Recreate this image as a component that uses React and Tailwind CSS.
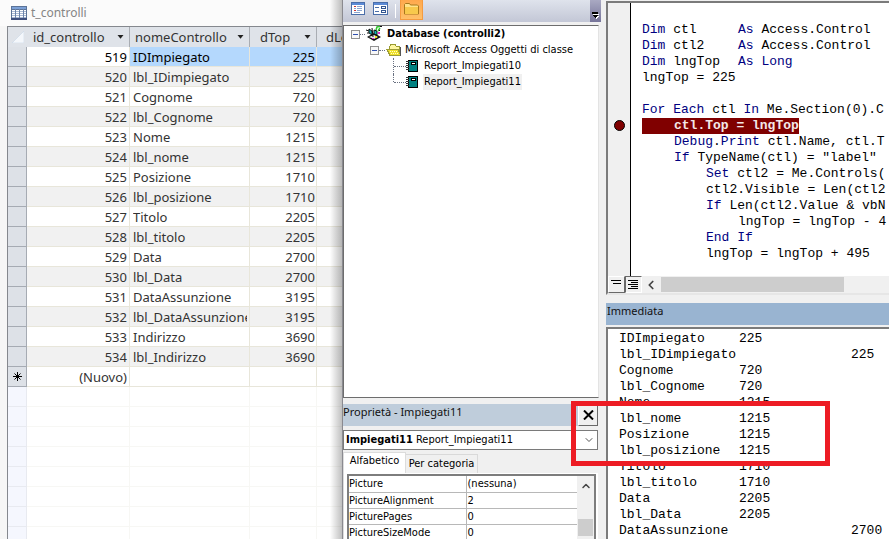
import clsx from 'clsx';
import { FiChevronDown, FiChevronLeft, FiChevronUp } from 'react-icons/fi';

const records = [
    { id: 519, name: 'IDImpiegato', top: 225 },
    { id: 520, name: 'lbl_IDimpiegato', top: 225 },
    { id: 521, name: 'Cognome', top: 720 },
    { id: 522, name: 'lbl_Cognome', top: 720 },
    { id: 523, name: 'Nome', top: 1215 },
    { id: 524, name: 'lbl_nome', top: 1215 },
    { id: 525, name: 'Posizione', top: 1710 },
    { id: 526, name: 'lbl_posizione', top: 1710 },
    { id: 527, name: 'Titolo', top: 2205 },
    { id: 528, name: 'lbl_titolo', top: 2205 },
    { id: 529, name: 'Data', top: 2700 },
    { id: 530, name: 'lbl_Data', top: 2700 },
    { id: 531, name: 'DataAssunzione', top: 3195 },
    { id: 532, name: 'lbl_DataAssunzione', top: 3195 },
    { id: 533, name: 'Indirizzo', top: 3690 },
    { id: 534, name: 'lbl_Indirizzo', top: 3690 },
];

const columns = [
    { label: 'id_controllo', pad: 'pl-[6px]' },
    { label: 'nomeControllo', pad: 'pl-[5px]' },
    { label: 'dTop', pad: 'pl-[10px]' },
    { label: 'dLeft', pad: 'pl-[9px]' },
];

const properties = [
    ['Picture', '(nessuna)'],
    ['PictureAlignment', '2'],
    ['PicturePages', '0'],
    ['PictureSizeMode', '0'],
];

// wide: the name runs past the first print zone, so the value goes to the next one
const output = [
    { name: 'IDImpiegato', value: 225 },
    { name: 'lbl_IDimpiegato', value: 225, wide: true },
    { name: 'Cognome', value: 720 },
    { name: 'lbl_Cognome', value: 720 },
    { name: 'Nome', value: 1215 },
    { name: 'lbl_nome', value: 1215 },
    { name: 'Posizione', value: 1215 },
    { name: 'lbl_posizione', value: 1215 },
    { name: 'Titolo', value: 1710 },
    { name: 'lbl_titolo', value: 1710 },
    { name: 'Data', value: 2205 },
    { name: 'lbl_Data', value: 2205 },
    { name: 'DataAssunzione', value: 2700, wide: true },
];

const code = [
    '',
    'Dim ctl\t\tAs Access.Control',
    'Dim ctl2\tAs Access.Control',
    'Dim lngTop\tAs Long',
    'lngTop = 225',
    '',
    'For Each ctl In Me.Section(0).C',
    '\tctl.Top = lngTop',
    '\tDebug.Print ctl.Name, ctl.T',
    '\tIf TypeName(ctl) = "label"',
    '\t\tSet ctl2 = Me.Controls(',
    '\t\tctl2.Visible = Len(ctl2',
    '\t\tIf Len(ctl2.Value & vbN',
    '\t\t\tlngTop = lngTop - 4',
    '\t\tEnd If',
    '\t\tlngTop = lngTop + 495',
];

const BREAKPOINT_LINE = 7;
const KEYWORDS = /\b(Dim|As|Long|For|Each|In|If|Set|End|Debug|Print)\b/;

function TableIcon() {
    return (
        <svg className="w-4 h-[14px]" viewBox="0 0 16 14" shapeRendering="crispEdges">
            <rect width="16" height="14" fill="#5b7397" />
            <rect x="1" y="1" width="14" height="2" fill="#7ba0d6" />
            <rect x="1" y="4" width="14" height="8" fill="#a9b9d3" />
            {[4, 6, 8, 10].map((y) =>
                [1, 5, 9, 13].map((x) => <rect key={`${x}-${y}`} x={x} y={y} width={x === 13 ? 2 : 3} height="1" fill="#fff" />)
            )}
            <path d="M4.500 3v10M8.500 3v10M12.500 3v10" stroke="#6d85aa" />
            <rect y="12" width="16" height="2" fill="#3e4f7c" />
        </svg>
    );
}

function ProjectIcon() {
    return (
        <svg className="w-4 h-4" viewBox="0 0 16 16">
            <path d="M1 11l7-4 7 4-7 4z" fill="#111" />
            <path d="M3 11l5-2 4 2-4 2z" fill="#eee" />
            <path d="M3 3l3 2v4L3 7z" fill="#12b5b5" stroke="#111" />
            <path d="M8 4l3 1v4L8 8z" fill="#12b5b5" stroke="#111" />
            <path d="M0 4l3 1M1 7h2M6 2l1 9" stroke="#111" />
            <path d="M10 4l1-3 4-1M14 2l-2 3" fill="none" stroke="#2fc42f" strokeWidth="1.500" />
            <path d="M14 0h2v1h-2zM13 4h1v1h-1z" fill="#111" />
            <path d="M12 6h2v2h-2zM6 12h2v1H6z" fill="#e02fd0" />
            <path d="M9 10h2v2H9z" fill="#f0e020" />
        </svg>
    );
}

function FolderIcon() {
    return (
        <svg className="w-4 h-4" viewBox="0 0 16 16" shapeRendering="crispEdges">
            <path d="M3.500 7V4.500l1.500-2h4l1.500 2h3V12" fill="#fff7a0" stroke="#9a9a30" />
            <path d="M1 7.500h11l2.500 6H4z" fill="#f0e22a" stroke="#9c9c38" />
            <path d="M4 9.500h8M5 11.500h8" stroke="#fffbd0" strokeDasharray="1 1" />
            <path d="M14.500 5v9" stroke="#555" />
        </svg>
    );
}

function ReportIcon() {
    return (
        <svg className="w-3 h-3" viewBox="0 0 12 12" shapeRendering="crispEdges">
            <rect x="2" y="0" width="10" height="12" fill="#000" />
            <rect x="3" y="1" width="8" height="10" fill="#008080" />
            <rect x="5" y="2" width="5" height="3" fill="#000" />
            <rect x="6" y="3" width="3" height="1" fill="#fff" />
            {[1, 3, 5, 7, 9].map((y) => <rect key={y} x="0" y={y} width="3" height="1" fill="#333" />)}
        </svg>
    );
}

function Expander() {
    return (
        <svg className="w-[9px] h-[9px] shrink-0" viewBox="0 0 9 9" shapeRendering="crispEdges">
            <rect x=".5" y=".5" width="8" height="8" fill="#f8f8f8" stroke="#919191" />
            <path d="M2 4.500h5" stroke="#3050b0" />
        </svg>
    );
}

function FilterArrow() {
    return (
        <svg className="w-[7px] h-1" viewBox="0 0 7 4">
            <path d="M.5 0h6L3.500 3.800z" fill="#222" />
        </svg>
    );
}

function Datasheet() {
    const cell = 'border-r border-b border-[#e8e6da] p-0 pt-px';
    const empty = 'border-r border-b border-[#f7f7f4] p-0';

    return (
        <section className="w-[342px] shrink-0 relative overflow-hidden bg-[#f6f6f6] flex flex-col font-['Noto_Sans',sans-serif]">
            <div className="h-[26px] shrink-0 bg-[#fbfbfb] flex items-center gap-1 pl-[11px] text-xs text-[#858585]">
                <TableIcon />
                t_controlli
            </div>
            <div className="flex-1 min-h-0 ml-[7px] border-t border-l border-[#85888e] bg-white overflow-hidden">
                <table className="table-fixed w-[400px] border-separate border-spacing-0 text-[13px] leading-[18px] text-[#333]">
                    <colgroup>
                        <col className="w-[19px]" />
                        <col className="w-[103px]" />
                        <col className="w-[120px]" />
                        <col className="w-[67px]" />
                        <col />
                    </colgroup>
                    <thead>
                        <tr className="h-5 bg-[#dfe3e9]">
                            <th className="p-0" aria-label="Seleziona tutto">
                                <svg className="w-3 h-3 ml-1" viewBox="0 0 12 12">
                                    <path d="M12 0v12H0z" fill="#f4f7fb" stroke="#c3d2e4" strokeWidth=".5" />
                                </svg>
                            </th>
                            {columns.map((col) => (
                                <th key={col.label} className="p-0 font-normal border-r border-[#a9adb3]">
                                    <div className={clsx('flex items-center justify-between pr-[5px]', col.pad)}>
                                        {col.label}
                                        <button aria-label={`Filtra ${col.label}`}><FilterArrow /></button>
                                    </div>
                                </th>
                            ))}
                        </tr>
                    </thead>
                    <tbody>
                        {records.map((r, i) => {
                            const selected = i === 0;
                            return (
                                <tr key={r.id} className={clsx('h-5', i % 2 === 1 && 'bg-[#f1f1f1]', selected && 'text-black')}>
                                    <td className="p-0 bg-[#dde1e7] border-r border-b border-[#a6abb3]"></td>
                                    <td className={clsx(cell, 'text-right pr-[2px]')}>{r.id}</td>
                                    <td className={clsx(cell, 'pl-[3px]', selected && 'bg-[#b4d8fd]')}>
                                        <div className="overflow-hidden whitespace-nowrap mr-[2px]">{r.name}</div>
                                    </td>
                                    <td className={clsx(cell, 'text-right pr-px', selected && 'bg-[#b4d8fd]')}>{r.top}</td>
                                    <td className={clsx(cell, selected && 'bg-[#b4d8fd]')}></td>
                                </tr>
                            );
                        })}
                        <tr className="h-5">
                            <td className="p-0 bg-[#dde1e7] border-r border-b border-[#a6abb3]">
                                <svg className="w-[9px] h-[9px] mx-auto" viewBox="0 0 9 9">
                                    <path d="M4.500 0v9M0 4.500h9M1.500 1.500l6 6M7.500 1.500l-6 6" stroke="#000" />
                                </svg>
                            </td>
                            <td className={clsx(cell, 'text-right pr-[2px]')}>(Nuovo)</td>
                            <td className={cell}></td>
                            <td className={cell}></td>
                            <td className={cell}></td>
                        </tr>
                        {Array.from({ length: 8 }, (_, i) => (
                            <tr key={i} className="h-5">
                                <td className="p-0 bg-[#f5f7fe] border-r border-b border-[#e8eaf0]"></td>
                                <td className={empty}></td>
                                <td className={empty}></td>
                                <td className={empty}></td>
                                <td className={empty}></td>
                            </tr>
                        ))}
                    </tbody>
                </table>
            </div>
            {/* Shadow of the editor window */}
            <div className="absolute inset-y-0 right-0 w-3 bg-linear-to-l from-black/25 to-transparent pointer-events-none"></div>
        </section>
    );
}

function Toolbar() {
    return (
        <div className="h-[22px] shrink-0 flex justify-between mr-[5px] bg-linear-to-b from-[#dfe3ec] to-[#c3c7d6] overflow-hidden">
            <div className="flex pl-1">
                <button aria-label="Visualizza codice" className="w-[22px] pt-px flex justify-center">
                    <svg className="w-[14px] h-[14px]" viewBox="0 0 14 14" shapeRendering="crispEdges">
                        <rect x=".5" y="1.500" width="13" height="12" fill="#fff" stroke="#4a6ea9" />
                        <path d="M1 3h12" stroke="#5b8ad6" strokeWidth="2" />
                        <path d="M3 5.500h2M3 9.500h2" stroke="#c33" />
                        <path d="M6 5.500h5M3 7.500h2M6 7.500h5M6 9.500h5M3 11.500h6" stroke="#8aa4cf" />
                    </svg>
                </button>
                <button aria-label="Visualizza oggetto" className="w-[22px] pt-px flex justify-center">
                    <svg className="w-[15px] h-[14px]" viewBox="0 0 15 14" shapeRendering="crispEdges">
                        <rect x=".5" y="1.500" width="14" height="12" fill="#fff" stroke="#4a6ea9" />
                        <path d="M1 3h13" stroke="#5b8ad6" strokeWidth="2" />
                        <path d="M2 6.500h4M2 10.500h4" stroke="#4a6ea9" />
                        <path d="M8.500 5.500h4v2h-4zM8.500 9.500h4v2h-4z" fill="none" stroke="#31548f" />
                    </svg>
                </button>
                <span className="w-px my-1 mx-1 bg-white"></span>
                <button aria-label="Mostra cartelle" className="w-[23px] h-5 bg-linear-to-b from-[#ffa84c] to-[#ffc069] border border-t-0 border-[#f59b3f] flex justify-center pt-[3px]">
                    <svg className="w-[15px] h-3" viewBox="0 0 15 12">
                        <path d="M.5 11V1.500L1.500.5h4l1 1.500h7l1 1V11z" fill="#ffe38a" stroke="#a9781c" />
                        <path d="M1 11V4h13v7z" fill="#f8c94c" />
                    </svg>
                </button>
            </div>
            <button aria-label="Opzioni barra degli strumenti" className="w-[11px] bg-linear-to-b from-[#a9a9c2] to-[#77759a] flex justify-center items-end pb-[3px]">
                <svg className="w-[7px] h-[7px]" viewBox="0 0 7 7" shapeRendering="crispEdges">
                    <path d="M1 2.500h6" stroke="#fff" />
                    <path d="M0 1h6" stroke="#000" strokeWidth="2" />
                    <path d="M1 4h6L4 7z" fill="#fff" />
                    <path d="M0 3h6L3 6z" fill="#000" />
                </svg>
            </button>
        </div>
    );
}

function ProjectTree() {
    return (
        <ul className="h-[373px] shrink-0 mt-[3px] mr-[7px] pl-[7px] bg-white border border-[#6d6d6d] border-r-[#e3e3e3] text-[11px] leading-4 whitespace-nowrap">
            <li>
                <div className="flex items-center h-4 font-bold">
                    <Expander />
                    <span className="w-[5px] border-t border-dotted border-gray-500 mr-px"></span>
                    <ProjectIcon />
                    <span className="pl-[5px]">Database (controlli2)</span>
                </div>
                <ul className="pl-[19px]">
                    <li>
                        <div className="flex items-center h-4">
                            <Expander />
                            <span className="w-[6px] border-t border-dotted border-gray-500 mr-px"></span>
                            <FolderIcon />
                            <span className="pl-[3px]">Microsoft Access Oggetti di classe</span>
                        </div>
                        <ul className="pl-[23px]">
                            {['Report_Impiegati10', 'Report_Impiegati11'].map((name, i) => (
                                <li key={name} className="flex items-center h-4">
                                    <span className={clsx('w-px self-start border-l border-dotted border-gray-500', i === 0 ? 'h-4' : 'h-2')}></span>
                                    <span className="w-3 border-t border-dotted border-gray-500"></span>
                                    <ReportIcon />
                                    <span className={clsx('ml-[5px] px-px', i === 1 && 'bg-[#f0f0f0]')}>{name}</span>
                                </li>
                            ))}
                        </ul>
                    </li>
                </ul>
            </li>
        </ul>
    );
}

function PropertiesPanel() {
    return (
        <div className="mt-[6px] flex-1 min-h-0 flex flex-col mr-2 text-[11px]">
            <div className="h-[22px] shrink-0 flex items-start justify-between bg-[#bfcddb]">
                <h2 className="font-['Noto_Sans',sans-serif] leading-4 text-[#111]">Proprietà - Impiegati11</h2>
                <button aria-label="Chiudi" className="w-5 h-[22px] bg-[#f0f0f0] border border-white border-r-[#696969] border-b-[#696969] flex items-center justify-center">
                    <svg className="w-[11px] h-[10px]" viewBox="0 0 11 10">
                        <path d="M1 .5l9 9M10 .5l-9 9" stroke="#000" strokeWidth="2" />
                    </svg>
                </button>
            </div>
            <button aria-label="Oggetto" className="h-5 shrink-0 mt-1 border border-[#7a7a7a] bg-white flex items-center pl-[2px] pr-[2px] whitespace-nowrap text-left">
                <span className="flex-1"><b>Impiegati11</b> Report_Impiegati11</span>
                <FiChevronDown className="w-3 h-3 text-[#555]" />
            </button>
            <div role="tablist" className="flex items-end shrink-0 mt-[2px] leading-4">
                <button role="tab" aria-selected="true" className="h-[21px] w-[63px] bg-white border border-b-0 border-[#dcdcdc] pb-1">Alfabetico</button>
                <button role="tab" aria-selected="false" className="h-[19px] w-[72px] bg-[#f0f0f0] border border-l-0 border-b-0 border-[#d9d9d9] whitespace-nowrap">Per categoria</button>
            </div>
            <div className="flex-1 min-h-0 bg-white pt-px pl-[3px] pr-[2px] border-l border-[#dcdcdc] overflow-hidden">
                <div className="flex border-2 border-b-0 border-[#7d7d7d] h-full overflow-hidden">
                    <table className="flex-1 table-fixed border-collapse leading-[15px] whitespace-nowrap">
                        <tbody>
                            {properties.map(([name, value]) => (
                                <tr key={name} className="h-4 border-b border-[#b8b8b8]">
                                    <th className="w-[117px] p-0 font-normal text-left border-r border-[#b8b8b8]">{name}</th>
                                    <td className="p-0 pl-px">{value}</td>
                                </tr>
                            ))}
                        </tbody>
                    </table>
                    <div className="w-[17px] shrink-0 bg-[#f0f0f0] flex flex-col items-center pt-1">
                        <FiChevronUp className="w-3 h-3 text-[#444]" strokeWidth={3} />
                        <span className="w-[15px] h-[17px] mt-[27px] bg-[#cdcdcd]"></span>
                    </div>
                </div>
            </div>
        </div>
    );
}

function CodeLine({ text, breakpoint }) {
    if (breakpoint) {
        return <span className="inline-block h-4 bg-[#800000] text-[#f4e8e8] font-bold">{text}</span>;
    }
    // split keeps the captured keywords at the odd positions
    return text.split(KEYWORDS).map((part, i) => (
        <span key={i} className={i % 2 === 1 ? 'text-[#000080]' : undefined}>{part}</span>
    ));
}

function CodeWindow() {
    return (
        <div className="mt-px border-2 border-r-0 border-[#7b7b7b] border-b-[#e6e6e6] flex flex-col shrink-0 bg-[#f0f0f0]">
            <div className="flex h-[273px] overflow-hidden">
                <div className="w-[23px] shrink-0 border-r border-black pt-[117px] pl-[6px]">
                    <span className="block w-[11px] h-[11px] rounded-full bg-[#800000] border border-black"></span>
                </div>
                <pre className="flex-1 min-w-0 overflow-hidden bg-white pl-[11px] pt-[3px] font-['Liberation_Mono',monospace] text-[13px] leading-4 [tab-size:32px]">
                    {code.map((line, i) => (
                        <div key={i} className="h-4"><CodeLine text={line} breakpoint={i === BREAKPOINT_LINE} /></div>
                    ))}
                </pre>
            </div>
            <div className="h-[17px] flex items-center">
                <button aria-label="Visualizza routine" className="w-[17px] h-[17px] border border-white border-r-[#696969] border-b-[#696969]">
                    <svg className="w-[14px] h-[14px]" viewBox="0 0 14 14" shapeRendering="crispEdges">
                        <path d="M2 2.500h10M4 5.500h8" stroke="#000" />
                    </svg>
                </button>
                <button aria-label="Visualizza modulo completo" className="w-[17px] h-[17px] border border-[#696969] border-r-white border-b-white">
                    <svg className="w-[14px] h-[14px]" viewBox="0 0 14 14" shapeRendering="crispEdges">
                        <path d="M2 2.500h10M5 4.500h7M2 6.500h10M5 8.500h7M2 10.500h10" stroke="#000" />
                    </svg>
                </button>
                <FiChevronLeft className="w-[14px] h-[14px] ml-[2px] mr-[3px] text-[#444]" strokeWidth={3} />
                <span className="w-[183px] h-[15px] bg-[#cdcdcd]"></span>
            </div>
        </div>
    );
}

function ImmediateWindow() {
    return (
        <div className="flex-1 min-h-0 flex flex-col mt-2">
            <h2 className="h-[22px] shrink-0 bg-[#99b4d1] pl-px font-['Noto_Sans',sans-serif] text-[11px] leading-4 text-[#111]">Immediata</h2>
            <div className="flex-1 min-h-0 relative mt-[2px] border-t-2 border-l-2 border-[#7b7b7b] bg-white">
                <ul className="h-full overflow-hidden pl-[11px] pt-[2px] font-['Liberation_Mono',monospace] text-[13px] leading-4 text-black">
                    {output.map((row) => (
                        <li key={row.name} className="grid grid-cols-[120px_112px_1fr] whitespace-nowrap">
                            <span className={clsx(row.wide && 'col-span-2')}>{row.name}</span>
                            <span>{row.value}</span>
                        </li>
                    ))}
                </ul>
                <div className="absolute z-10 -left-[37px] top-[72px] w-[259px] h-[65px] border-[5px] border-[#ed1c24]"></div>
            </div>
        </div>
    );
}

export default function App() {
    return (
        <div className="h-screen flex overflow-hidden bg-[#f0f0f0] text-black">
            <Datasheet />
            <section className="w-[264px] shrink-0 flex flex-col border-l border-[#8a8a90] font-['DejaVu_Sans_Condensed','DejaVu_Sans',sans-serif]">
                <Toolbar />
                <ProjectTree />
                <PropertiesPanel />
            </section>
            <section className="flex-1 min-w-0 flex flex-col">
                <CodeWindow />
                <ImmediateWindow />
            </section>
        </div>
    );
}
